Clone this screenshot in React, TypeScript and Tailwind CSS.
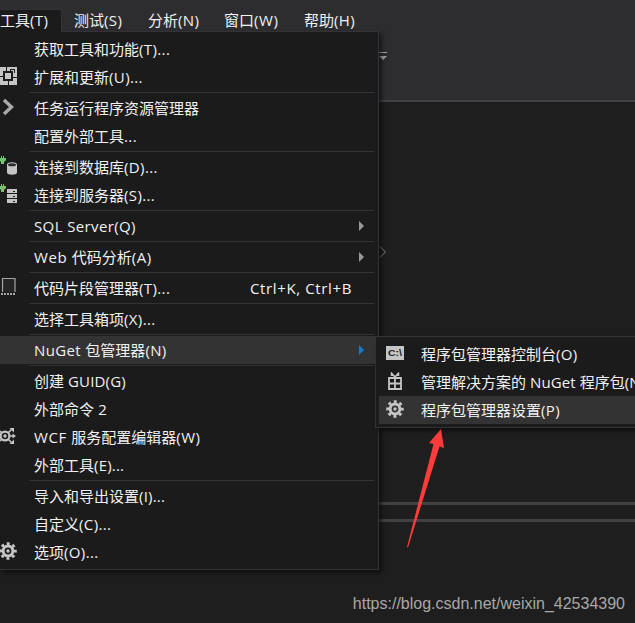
import React from "react";

type Item = { label: string; icon?: React.ReactNode; keys?: string; sub?: boolean; active?: boolean; tracking?: string };

const Gear = () => (
  <svg width="18" height="18" viewBox="0 0 18 18" fill="none" stroke="#c5c5c5">
    <circle cx="9" cy="9" r="4.9" strokeWidth="3" />
    <circle cx="9" cy="9" r="7.4" strokeWidth="2.8" strokeDasharray="2.9 2.912" strokeDashoffset="1.45" />
    <circle cx="9" cy="9" r="1.7" fill="#c5c5c5" stroke="none" />
  </svg>
);

const Extensions = () => (
  <svg width="18" height="18" viewBox="0 0 18 18" shapeRendering="crispEdges">
    <path d="M0 0H17V18H0Z" fill="#c5c5c5" />
    <path d="M3 4H13V14H3Z" fill="#1b1b1c" />
    <path d="M5 6H11V12H5Z" fill="#c5c5c5" />
    <path d="M6 0H7V4H6ZM8 14H9V18H8ZM0 9H3V10H0ZM13 10H17V11H13ZM10 2H15V3H10ZM14 2H15V6H14ZM10 3H11V5H10Z" fill="#1b1b1c" />
  </svg>
);

const Chevron = () => (
  <svg width="18" height="18" viewBox="0 0 18 18" fill="none">
    <path d="M4 2L11.5 9L4 16" stroke="#aaaaaa" strokeWidth="3.4" />
  </svg>
);

const Plug = () => <path d="M1 0H2V2H3V0H4V2H6V4L4 6V8H1V6L0 5V2H1Z" fill="#72c472" />;

const Database = () => (
  <svg width="18" height="20" viewBox="0 0 18 20">
    <Plug />
    <path d="M7 8.5C7 5.6 17 5.6 17 8.5V16.5C17 19.5 7 19.5 7 16.5Z" fill="#c5c5c5" />
    <ellipse cx="12" cy="8.7" rx="4" ry="1.5" fill="#29292a" />
  </svg>
);

const Server = () => (
  <svg width="18" height="20" viewBox="0 0 18 20">
    <Plug />
    <path d="M7 5H17V9H7ZM7 10H17V14H7ZM7 15H17V19H7Z" fill="#c5c5c5" />
    <path d="M13 7H15V8H13ZM13 12H15V13H13ZM13 17H15V18H13Z" fill="#1b1b1c" />
  </svg>
);

const Snippet = () => (
  <svg width="18" height="18" viewBox="0 0 18 18" fill="none" stroke="#a5a5a5">
    <path d="M2.5 14V0.5H15V14" fill="#252526" strokeWidth="1.2" />
    <path d="M1 16H16" strokeWidth="2" strokeDasharray="2 1" />
  </svg>
);

const Wcf = () => (
  <svg className="-ml-px" width="18" height="20" viewBox="0 0 18 20" fill="none" stroke="#c5c5c5">
    <circle cx="6" cy="10" r="4.4" strokeWidth="2.2" />
    <circle cx="6" cy="10" r="1.7" fill="#c5c5c5" stroke="none" />
    <path d="M1 5L3 7M1 15L3 13M9 13L12.5 16.5M9 7L12.5 3.5M11 10H15" strokeWidth="1.6" />
    <path d="M10.5 2H15V6.5ZM10.5 18H15V13.5ZM13.5 7.5L17 10L13.5 12.5Z" fill="#c5c5c5" stroke="none" />
  </svg>
);

const Console = () => (
  <svg width="18" height="16" viewBox="0 0 18 16">
    <path d="M0 1H18V15H0Z" fill="#c5c5c5" />
    <text x="2" y="11.3" textLength="14" lengthAdjust="spacingAndGlyphs" fontSize="9" fontWeight="bold" fontFamily="Liberation Sans, sans-serif" fill="#1b1b1c">C:\</text>
  </svg>
);

const Gift = () => (
  <svg width="18" height="18" viewBox="0 0 18 18" fill="none" stroke="#c5c5c5">
    <path d="M3 6H15V17H3ZM9 5V17M3 11.5H15" strokeWidth="1.8" />
    <path d="M5 0.5L9 5L13 0.5M5.5 1.5V4M12.5 1.5V4" strokeWidth="1.5" />
  </svg>
);

const groups: Item[][] = [
  [{ label: "获取工具和功能(T)..." }, { label: "扩展和更新(U)...", icon: <Extensions /> }],
  [{ label: "任务运行程序资源管理器", icon: <Chevron /> }, { label: "配置外部工具..." }],
  [{ label: "连接到数据库(D)...", icon: <Database /> }, { label: "连接到服务器(S)...", icon: <Server /> }],
  [{ label: "SQL Server(Q)", sub: true }],
  [{ label: "Web 代码分析(A)", sub: true, tracking: "tracking-[0.6px]" }],
  [{ label: "代码片段管理器(T)...", icon: <Snippet />, keys: "Ctrl+K, Ctrl+B" }],
  [{ label: "选择工具箱项(X)..." }],
  [{ label: "NuGet 包管理器(N)", sub: true, active: true }],
  [{ label: "创建 GUID(G)", tracking: "tracking-[0.15px]" }, { label: "外部命令 2" }, { label: "WCF 服务配置编辑器(W)", icon: <Wcf />, tracking: "tracking-[0.55px]" }, { label: "外部工具(E)...", tracking: "tracking-[0.2px]" }],
  [{ label: "导入和导出设置(I)...", tracking: "tracking-[0.2px]" }, { label: "自定义(C)..." }, { label: "选项(O)...", icon: <span className="-ml-px"><Gear /></span> }],
];

const submenu: Item[] = [
  { label: "程序包管理器控制台(O)", icon: <Console /> },
  { label: "管理解决方案的 NuGet 程序包(N)...", icon: <Gift />, tracking: "tracking-[0.1px]" },
  { label: "程序包管理器设置(P)", icon: <Gear />, active: true },
];

// Latin runs are set slightly looser than the Chinese text around them.
function Label({ text, tracking = "tracking-[0.38px]" }: { text: string; tracking?: string }) {
  return (
    <span className="whitespace-pre">
      {text.split(/([\u4e00-\u9fff]+)/).map((part, i) =>
        i % 2 ? part : part && <span key={i} className={tracking}>{part}</span>
      )}
    </span>
  );
}

function Row({ item }: { item: Item }) {
  return (
    <div className={`flex h-7 items-center ${item.active ? "bg-[#333334]" : ""}`}>
      <span className="flex w-[34px] shrink-0 items-center pb-0.5">{item.icon}</span>
      <Label text={item.label} tracking={item.tracking} />
      {item.keys && <span className="mr-[24px] ml-auto tracking-[0.63px]">{item.keys}</span>}
      {item.sub && (
        <svg className="mr-3 ml-auto" width="5" height="10" viewBox="0 0 5 10">
          <path d="M0 0L5 5L0 10Z" fill={item.active ? "#0e7fd3" : "#999999"} />
        </svg>
      )}
    </div>
  );
}

export default function App() {
  return (
    <div className="relative flex h-[623px] w-[635px] flex-col overflow-hidden bg-[#1e1e1e] font-['Open_Sans','Noto_Sans_CJK_SC',sans-serif] text-[15px] leading-[20px] whitespace-nowrap text-[#f1f1f1]">
      <header className="flex h-[102px] shrink-0 flex-col border-b-2 border-[#3f3f46] bg-[#2d2d30]">
        <nav className="flex h-8 pt-[9px]">
          <span className="flex w-[62px] items-center border-t border-r border-[#333337] bg-[#1b1b1c] pb-0.5"><Label text="工具(T)" /></span>
          <span className="flex w-[74px] items-center pb-0.5 pl-3"><Label text="测试(S)" /></span>
          <span className="flex w-[76px] items-center pb-0.5 pl-3"><Label text="分析(N)" /></span>
          <span className="flex w-20 items-center pb-0.5 pl-3"><Label text="窗口(W)" tracking="tracking-[0.6px]" /></span>
          <span className="flex w-20 items-center pb-0.5 pl-3"><Label text="帮助(H)" /></span>
        </nav>
        <svg className="mt-5 ml-[378px]" width="10" height="9" viewBox="0 0 10 9">
          <path d="M0 0H9V1H0ZM1 4H9L5 8Z" fill="#a0a0a0" />
        </svg>
      </header>
      <main className="flex grow flex-col">
        <div className="h-[400px] pt-[144px] pl-[379px]">
          <svg width="8" height="12" viewBox="0 0 8 12" fill="none"><path d="M1 0.5L6.5 6L1 11.5" stroke="#888" /></svg>
        </div>
        <div className="h-5 border-y-[3px] border-[#414142]" />
      </main>

      <div className="absolute top-[31px] left-0 w-[379px] border-y border-r border-[#333337] bg-[#1b1b1c] py-[3px] pr-[2px] shadow-[3px_3px_4px_rgba(0,0,0,0.5)]">
        {groups.map((group, i) => (
          <div key={i}>
            {i > 0 && <div className="mr-[2px] ml-[29px] flex h-[3px] items-center"><div className="h-px grow bg-[#333337]" /></div>}
            {group.map((item) => <Row key={item.label} item={item} />)}
          </div>
        ))}
      </div>
      <div className="absolute top-[31px] left-0 h-px w-[61px] bg-[#1b1b1c]" />

      <div className="absolute top-[336px] left-[375px] w-[300px] border border-[#333337] bg-[#1b1b1c] p-[3px] shadow-[3px_3px_4px_rgba(0,0,0,0.5)]">
        {submenu.map((item) => (
          <div key={item.label} className={`flex h-7 items-center ${item.active ? "bg-[#333334]" : ""}`}>
            <span className="flex w-[42px] shrink-0 pb-0.5 pl-[7px]">{item.icon}</span>
            <Label text={item.label} tracking={item.tracking} />
          </div>
        ))}
      </div>

      <svg className="absolute top-[428px] left-[404px]" width="42" height="122" viewBox="404 428 42 122">
        <path d="M441 429L429 443L433.5 444L407 547L408 547.5L439.5 446.5L444 448Z" fill="#ff3b3b" />
      </svg>
      <div className="absolute right-[10px] bottom-[9px] font-['Liberation_Sans',sans-serif] text-[16px] text-[#a8a8a8]">https://blog.csdn.net/weixin_42534390</div>
    </div>
  );
}
